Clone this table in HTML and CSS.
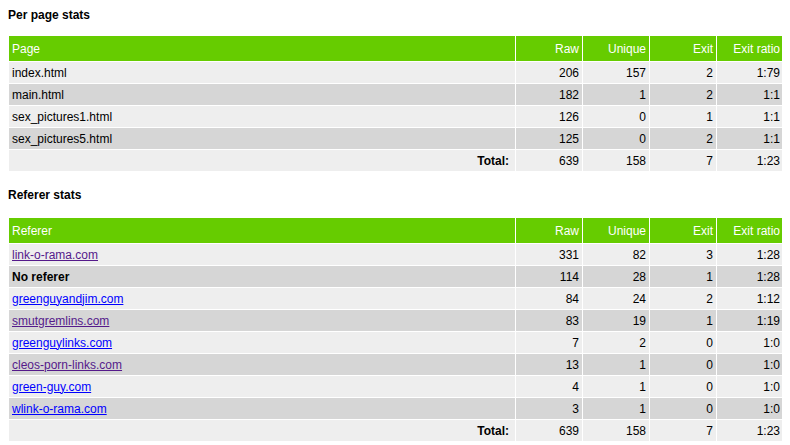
FILE: index.html
```html
<!DOCTYPE html>
<html>
<head>
<meta charset="utf-8">
<title>Stats</title>
<link rel="stylesheet" href="styles.css">
</head>
<body>
<div class="title title-first">Per page stats</div>
<table class="stats">
  <tr class="head">
    <td class="name">Page</td><td class="num">Raw</td><td class="num">Unique</td><td class="num">Exit</td><td class="num">Exit ratio</td>
  </tr>
  <tr class="light"><td class="name">index.html</td><td class="num">206</td><td class="num">157</td><td class="num">2</td><td class="num">1:79</td></tr>
  <tr class="dark"><td class="name">main.html</td><td class="num">182</td><td class="num">1</td><td class="num">2</td><td class="num">1:1</td></tr>
  <tr class="light"><td class="name">sex_pictures1.html</td><td class="num">126</td><td class="num">0</td><td class="num">1</td><td class="num">1:1</td></tr>
  <tr class="dark"><td class="name">sex_pictures5.html</td><td class="num">125</td><td class="num">0</td><td class="num">2</td><td class="num">1:1</td></tr>
  <tr class="light"><td class="name total">Total:</td><td class="num">639</td><td class="num">158</td><td class="num">7</td><td class="num">1:23</td></tr>
</table>

<div class="title title-second">Referer stats</div>
<table class="stats">
  <tr class="head">
    <td class="name">Referer</td><td class="num">Raw</td><td class="num">Unique</td><td class="num">Exit</td><td class="num">Exit ratio</td>
  </tr>
  <tr class="light"><td class="name"><a class="visited" href="#">link-o-rama.com</a></td><td class="num">331</td><td class="num">82</td><td class="num">3</td><td class="num">1:28</td></tr>
  <tr class="dark"><td class="name bold">No referer</td><td class="num">114</td><td class="num">28</td><td class="num">1</td><td class="num">1:28</td></tr>
  <tr class="light"><td class="name"><a class="link" href="#">greenguyandjim.com</a></td><td class="num">84</td><td class="num">24</td><td class="num">2</td><td class="num">1:12</td></tr>
  <tr class="dark"><td class="name"><a class="visited" href="#">smutgremlins.com</a></td><td class="num">83</td><td class="num">19</td><td class="num">1</td><td class="num">1:19</td></tr>
  <tr class="light"><td class="name"><a class="link" href="#">greenguylinks.com</a></td><td class="num">7</td><td class="num">2</td><td class="num">0</td><td class="num">1:0</td></tr>
  <tr class="dark"><td class="name"><a class="visited" href="#">cleos-porn-links.com</a></td><td class="num">13</td><td class="num">1</td><td class="num">0</td><td class="num">1:0</td></tr>
  <tr class="light"><td class="name"><a class="link" href="#">green-guy.com</a></td><td class="num">4</td><td class="num">1</td><td class="num">0</td><td class="num">1:0</td></tr>
  <tr class="dark"><td class="name"><a class="link" href="#">wlink-o-rama.com</a></td><td class="num">3</td><td class="num">1</td><td class="num">0</td><td class="num">1:0</td></tr>
  <tr class="light"><td class="name total">Total:</td><td class="num">639</td><td class="num">158</td><td class="num">7</td><td class="num">1:23</td></tr>
</table>
</body>
</html>
```

FILE: styles.css
```css
html, body {
  background: #ffffff;
}
body {
  margin: 8px;
  font-family: "Liberation Sans", Arial, sans-serif;
  font-size: 12px;
  color: #000000;
}
.title {
  font-weight: bold;
  font-size: 12px;
  line-height: 14px;
}
.title-second {
  margin-top: 16px;
}
.stats {
  width: 776px;
  border-collapse: separate;
  border-spacing: 1px;
  table-layout: fixed;
  margin-top: 13px;
  margin-left: 0;
}
.title-second + .stats {
  margin-top: 15px;
}
.stats td {
  box-sizing: border-box;
  padding: 0 3px;
  font-size: 12px;
  line-height: 14px;
  vertical-align: middle;
  height: 21px;
  white-space: nowrap;
}
.stats .head td {
  height: 25px;
  background: #66cc00;
  color: #ffffff;
}
.stats td.num {
  width: 66px;
  text-align: right;
}
.stats td.name {
  text-align: left;
}
.stats td.total {
  text-align: right;
  font-weight: bold;
  padding-right: 6px;
}
.stats td.bold {
  font-weight: bold;
}
.light td {
  background: #eeeeee;
}
.dark td {
  background: #d6d6d6;
}
a.link {
  color: #0000ff;
  text-decoration: underline;
}
a.visited {
  color: #551a8b;
  text-decoration: underline;
}
```
